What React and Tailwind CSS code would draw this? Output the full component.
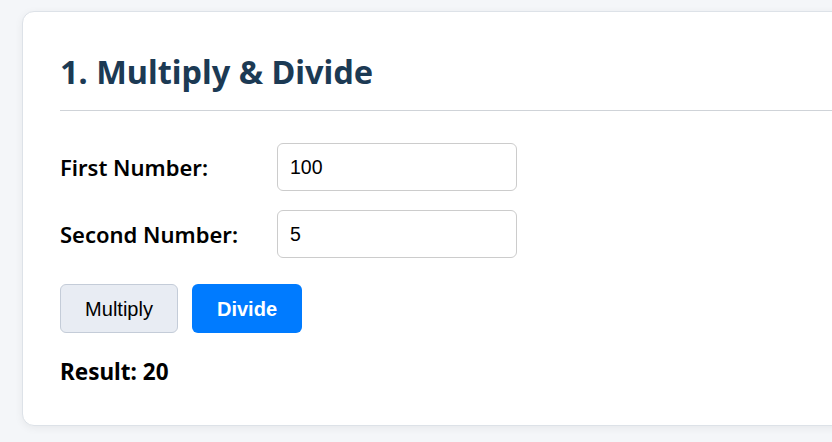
export default function App() {
  const sans = { fontFamily: '"Noto Sans", "Open Sans", sans-serif' };
  const arial = { fontFamily: '"Liberation Sans", Arial, sans-serif' };
  return (
    <div className="w-[832px] h-[442px] overflow-hidden bg-[#f4f6f9] pt-[11px] pl-[22px]" style={sans}>
      <div className="w-[900px] h-[415px] bg-white border border-[#dde2e8] rounded-[12px] shadow-[0_2px_8px_rgba(0,0,0,0.06)] pl-[37px] pt-[41px]">
        <h2 className="text-[32.5px] leading-[38px] font-bold text-[#1c3a54] pb-[19px] border-b border-[#cfd3d8]">1. Multiply &amp; Divide</h2>
        <div className="mt-[32px] flex flex-col gap-[19px]">
          <div className="flex items-center">
            <label className="w-[217px] text-[22px] font-semibold text-black">First Number:</label>
            <input defaultValue="100" className="w-[240px] h-[48px] border border-[#cccccc] rounded-[6px] px-[12px] text-[19.5px] text-black outline-none" style={arial} />
          </div>
          <div className="flex items-center">
            <label className="w-[217px] text-[22px] font-semibold text-black">Second Number:</label>
            <input defaultValue="5" className="w-[240px] h-[48px] border border-[#cccccc] rounded-[6px] px-[12px] text-[19.5px] text-black outline-none" style={arial} />
          </div>
        </div>
        <div className="mt-[26px] flex gap-[14px]" style={arial}>
          <button className="w-[118px] h-[49px] bg-[#e8ecf3] border border-[#c4ccd8] rounded-[6px] text-[20px] text-black">Multiply</button>
          <button className="w-[110px] h-[49px] bg-[#007bff] rounded-[6px] text-[20px] font-bold text-white">Divide</button>
        </div>
        <div className="mt-[24px] text-[22.5px] leading-[30px] font-bold text-black">Result: 20</div>
      </div>
    </div>
  );
}
